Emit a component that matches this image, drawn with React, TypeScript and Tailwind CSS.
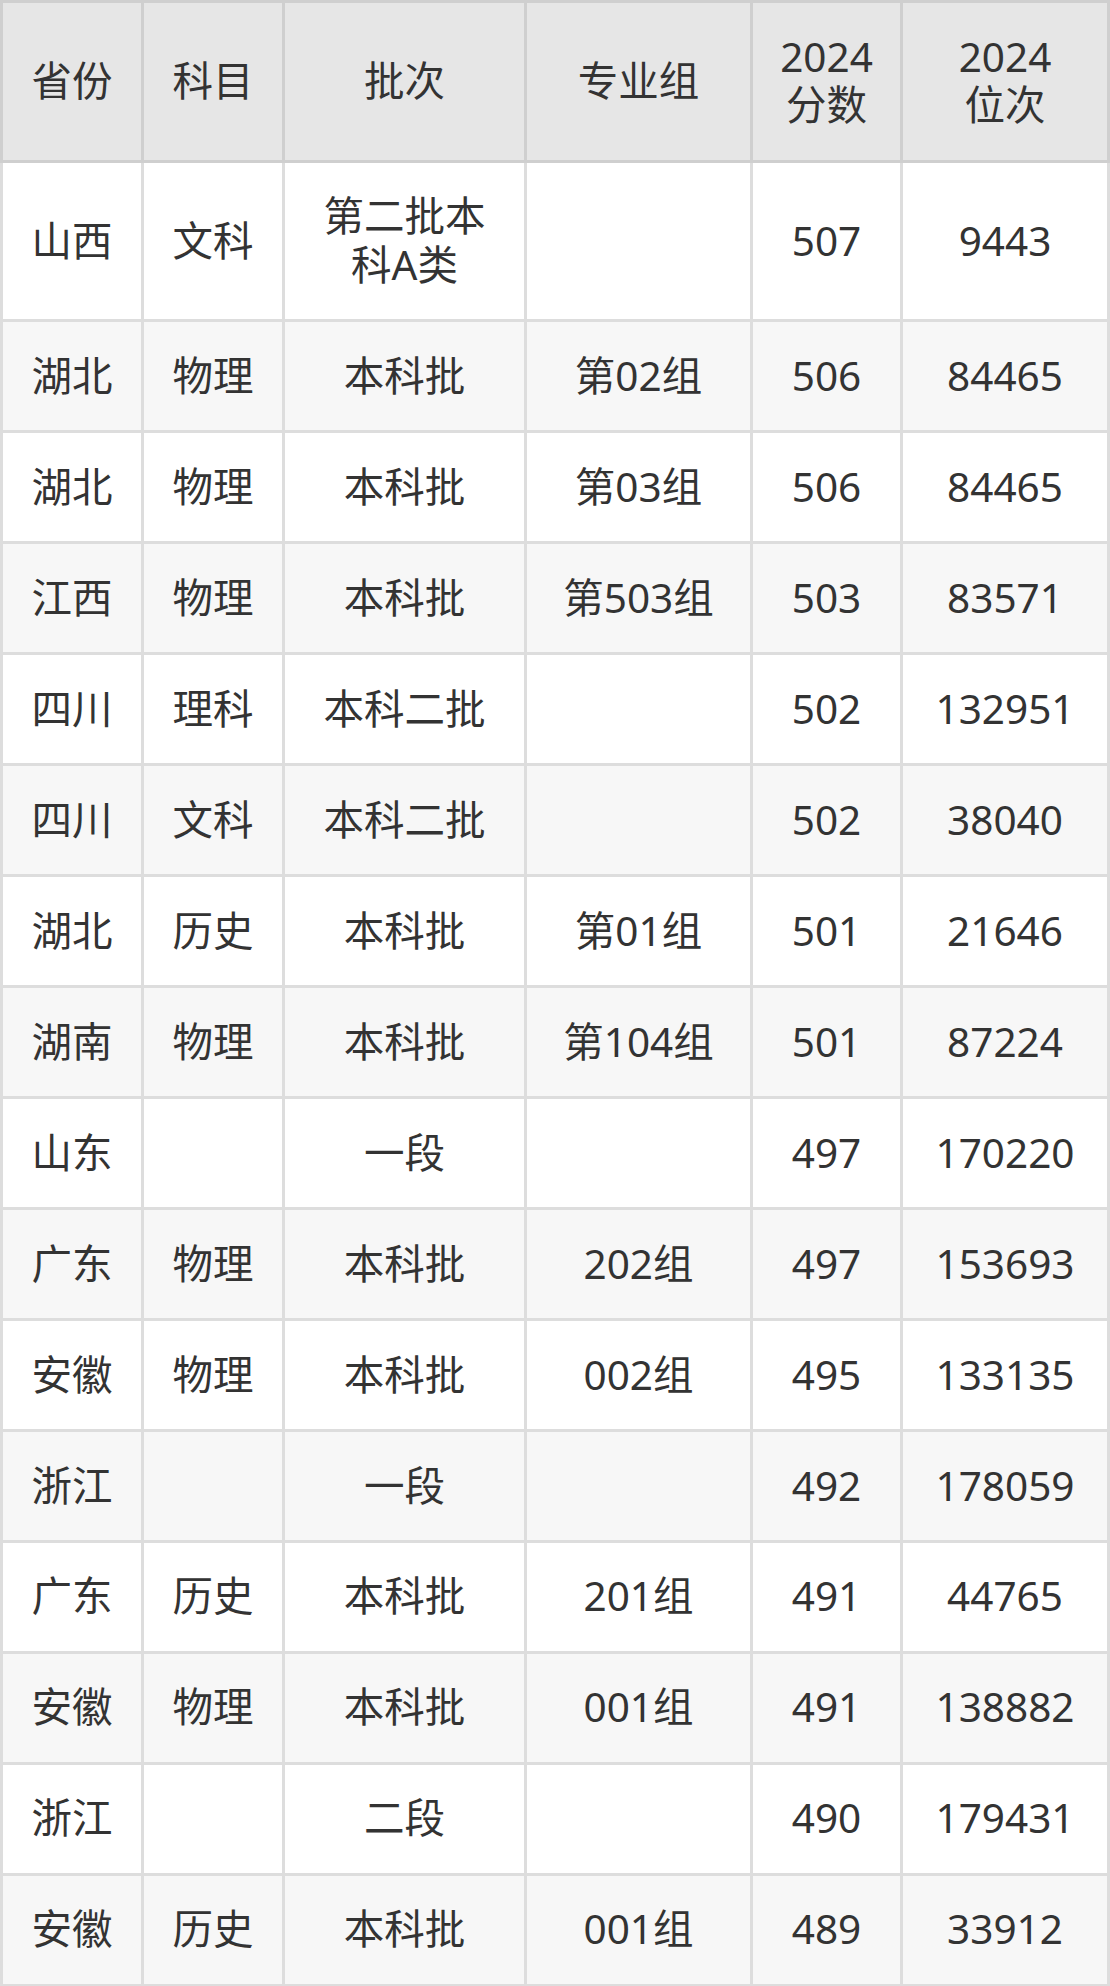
type Row = {
  province: string;
  subject: string;
  batch: string;
  group: string;
  score: string;
  rank: string;
};

const rows: Row[] = [
  { province: "山西", subject: "文科", batch: "第二批本科A类", group: "", score: "507", rank: "9443" },
  { province: "湖北", subject: "物理", batch: "本科批", group: "第02组", score: "506", rank: "84465" },
  { province: "湖北", subject: "物理", batch: "本科批", group: "第03组", score: "506", rank: "84465" },
  { province: "江西", subject: "物理", batch: "本科批", group: "第503组", score: "503", rank: "83571" },
  { province: "四川", subject: "理科", batch: "本科二批", group: "", score: "502", rank: "132951" },
  { province: "四川", subject: "文科", batch: "本科二批", group: "", score: "502", rank: "38040" },
  { province: "湖北", subject: "历史", batch: "本科批", group: "第01组", score: "501", rank: "21646" },
  { province: "湖南", subject: "物理", batch: "本科批", group: "第104组", score: "501", rank: "87224" },
  { province: "山东", subject: "", batch: "一段", group: "", score: "497", rank: "170220" },
  { province: "广东", subject: "物理", batch: "本科批", group: "202组", score: "497", rank: "153693" },
  { province: "安徽", subject: "物理", batch: "本科批", group: "002组", score: "495", rank: "133135" },
  { province: "浙江", subject: "", batch: "一段", group: "", score: "492", rank: "178059" },
  { province: "广东", subject: "历史", batch: "本科批", group: "201组", score: "491", rank: "44765" },
  { province: "安徽", subject: "物理", batch: "本科批", group: "001组", score: "491", rank: "138882" },
  { province: "浙江", subject: "", batch: "二段", group: "", score: "490", rank: "179431" },
  { province: "安徽", subject: "历史", batch: "本科批", group: "001组", score: "489", rank: "33912" },
];

// each entry is one line of the header cell
const headers: string[][] = [
  ["省份"],
  ["科目"],
  ["批次"],
  ["专业组"],
  ["2024", "分数"],
  ["2024", "位次"],
];

const cell =
  "px-[25px] py-[29.7px] text-center align-middle font-normal border-r-[3px] border-b-[3px]";

export default function App() {
  return (
    <div
      className="w-[1110px] bg-white text-[#333333] text-[40.5px] leading-[48.6px]"
      style={{ fontFamily: '"Noto Sans", "Noto Sans CJK SC", sans-serif' }}
    >
      <table className="w-[1110px] table-fixed border-separate border-spacing-0">
        <colgroup>
          <col className="w-[144px]" />
          <col className="w-[141px]" />
          <col className="w-[242px]" />
          <col className="w-[226px]" />
          <col className="w-[150px]" />
          <col className="w-[207px]" />
        </colgroup>
        <thead>
          <tr className="bg-[#e6e6e6]">
            {headers.map((lines, i) => (
              <th
                key={i}
                className={`${cell} border-t-[3px] border-[#cfcfcf] ${i === 0 ? "border-l-[3px]" : ""}`}
              >
                {lines.map((l) => (
                  <span key={l} className="block h-[48.6px]">
                    {l}
                  </span>
                ))}
              </th>
            ))}
          </tr>
        </thead>
        <tbody>
          {rows.map((r, idx) => {
            const values = [r.province, r.subject, r.batch, r.group, r.score, r.rank];
            return (
              <tr key={idx} className={idx % 2 === 1 ? "bg-[#f7f7f7]" : "bg-white"}>
                {values.map((v, i) => (
                  <td
                    key={i}
                    className={`${cell} border-[#dddddd] ${i === 0 ? "border-l-[3px]" : ""}`}
                  >
                    {v}
                  </td>
                ))}
              </tr>
            );
          })}
        </tbody>
      </table>
    </div>
  );
}
